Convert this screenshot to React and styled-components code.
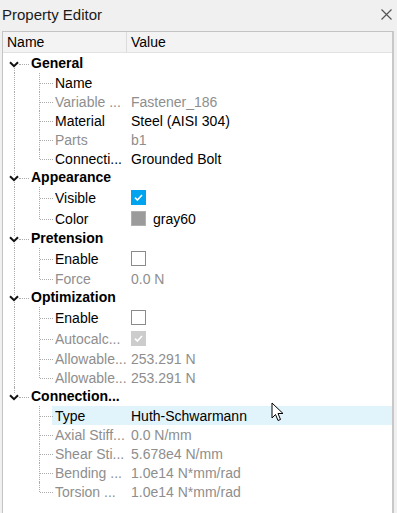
import React from 'react'
import styled, { createGlobalStyle } from 'styled-components'

const GlobalStyle = createGlobalStyle`
  html, body {
    margin: 0;
    padding: 0;
    background: #f0f0f0;
  }
  body {
    font-family: "Liberation Sans", Arial, sans-serif;
    font-size: 14px;
    color: #000;
  }
`

const Window = styled.div`
  position: relative;
  width: 397px;
  height: 513px;
  overflow: hidden;
  display: flex;
  flex-direction: column;
`

const TitleBar = styled.div`
  height: 31px;
  display: flex;
  align-items: center;
  justify-content: space-between;
  padding: 0 4px 0 2px;
  box-sizing: border-box;
`

const Title = styled.span`
  font-size: 15px;
  color: #1a1a1a;
  margin-top: -3px;
`

const CloseBtn = styled.div`
  width: 14px;
  height: 14px;
  display: flex;
  align-items: center;
  justify-content: center;
  margin-top: -2px;
`

const Panel = styled.div`
  flex: 1;
  margin-left: 2px;
  width: 392px;
  box-sizing: border-box;
  background: #fff;
  border: 1px solid #c4c4c4;
  border-right: 2px solid #c8c8c8;
  border-bottom: none;
  display: flex;
  flex-direction: column;
`

const Header = styled.div`
  height: 21px;
  display: flex;
  background: #f3f3f3;
  border-bottom: 1px solid #e2e2e2;
  box-sizing: border-box;
  margin-bottom: 1px;
`

const HeaderCell = styled.div`
  width: ${({ w }) => (w ? `${w}px` : 'auto')};
  flex: ${({ w }) => (w ? 'none' : '1')};
  padding-left: ${({ pad }) => pad}px;
  line-height: 20px;
  border-right: ${({ w }) => (w ? '1px solid #dcdcdc' : 'none')};
  box-sizing: border-box;
`

const Row = styled.div`
  display: flex;
  height: ${({ tall }) => (tall ? 21 : 19)}px;
  align-items: stretch;
`

const Guide = styled.div`
  position: relative;
  width: ${({ w }) => w}px;
  flex: none;

  /* vertical dotted line */
  &::before {
    content: '';
    display: ${({ v }) => (v ? 'block' : 'none')};
    position: absolute;
    left: ${({ vx }) => vx}px;
    top: ${({ v }) => (v === 'bottom' ? '50%' : '0')};
    bottom: ${({ v }) => (v === 'top' ? '50%' : '0')};
    border-left: 1px dotted #ababab;
  }

  /* horizontal dotted line */
  &::after {
    content: '';
    display: ${({ h }) => (h ? 'block' : 'none')};
    position: absolute;
    left: ${({ hx }) => hx}px;
    right: ${({ hr }) => hr || 0}px;
    top: 50%;
    border-top: 1px dotted #ababab;
  }
`

const Chevron = styled.svg`
  position: absolute;
  left: 6px;
  top: 50%;
  margin-top: -3px;
  z-index: 1;
  background: #fff;
`

const Content = styled.div`
  flex: 1;
  display: flex;
  background: ${({ selected }) => (selected ? '#e1f4fc' : 'transparent')};
`

const GroupLabel = styled.div`
  width: 95px;
  font-weight: bold;
  line-height: 19px;
  white-space: nowrap;
  overflow: hidden;
`

const NameCell = styled.div`
  width: 74px;
  flex: none;
  padding-left: 3px;
  box-sizing: border-box;
  display: flex;
  align-items: center;
  white-space: nowrap;
  overflow: hidden;
  color: ${({ disabled }) => (disabled ? '#8e8e8e' : '#000')};
`

const ValueCell = styled.div`
  flex: 1;
  padding-left: 5px;
  display: flex;
  align-items: center;
  gap: 7px;
  white-space: nowrap;
  color: ${({ disabled }) => (disabled ? '#8e8e8e' : '#000')};
`

const Box = styled.div`
  width: 15px;
  height: 15px;
  box-sizing: border-box;
  display: flex;
  align-items: center;
  justify-content: center;
  background: ${({ checked, disabled }) =>
    checked ? (disabled ? '#cccccc' : '#00a3ee') : '#fff'};
  border: 1px solid
    ${({ checked, disabled }) =>
      checked ? (disabled ? '#cccccc' : '#00a3ee') : '#8a8a8a'};
`

const Swatch = styled.div`
  width: 15px;
  height: 15px;
  box-sizing: border-box;
  background: ${({ color }) => color};
  border: 1px solid #b0b0b0;
`

const Cursor = styled.svg`
  position: absolute;
  left: 271px;
  top: 402px;
`

const groups = [
  {
    name: 'General',
    items: [
      { label: 'Name' },
      { label: 'Variable ...', value: 'Fastener_186', disabled: true },
      { label: 'Material', value: 'Steel (AISI 304)' },
      { label: 'Parts', value: 'b1', disabled: true },
      { label: 'Connecti...', value: 'Grounded Bolt' },
    ],
  },
  {
    name: 'Appearance',
    items: [
      { label: 'Visible', check: true },
      { label: 'Color', swatch: '#9b9b9b', value: 'gray60' },
    ],
  },
  {
    name: 'Pretension',
    items: [
      { label: 'Enable', check: false },
      { label: 'Force', value: '0.0 N', disabled: true },
    ],
  },
  {
    name: 'Optimization',
    items: [
      { label: 'Enable', check: false },
      { label: 'Autocalc...', check: true, disabled: true },
      { label: 'Allowable...', value: '253.291 N', disabled: true },
      { label: 'Allowable...', value: '253.291 N', disabled: true },
    ],
  },
  {
    name: 'Connection...',
    items: [
      { label: 'Type', value: 'Huth-Schwarmann', selected: true },
      { label: 'Axial Stiff...', value: '0.0 N/mm', disabled: true },
      { label: 'Shear Sti...', value: '5.678e4 N/mm', disabled: true },
      { label: 'Bending ...', value: '1.0e14 N*mm/rad', disabled: true },
      { label: 'Torsion ...', value: '1.0e14 N*mm/rad', disabled: true },
    ],
  },
]

const Check = ({ color }) => (
  <svg width="9" height="7" viewBox="0 0 9 7">
    <path d="M1 3.6 L3.4 6 L8 1" fill="none" stroke={color} strokeWidth="1.6" />
  </svg>
)

const PropertyRow = ({ item, lastGroup, lastItem }) => {
  const tall = item.check !== undefined || item.swatch
  return (
    <Row tall={tall}>
      <Guide w={25} vx={11} v={lastGroup ? null : 'full'} />
      <Guide w={24} vx={11} v={lastItem ? 'top' : 'full'} h hx={12} hr={-1} />
      <Content selected={item.selected}>
        <NameCell disabled={item.disabled}>{item.label}</NameCell>
        <ValueCell disabled={item.disabled}>
          {item.check !== undefined && (
            <Box checked={item.check} disabled={item.disabled}>
              {item.check && <Check color="#fff" />}
            </Box>
          )}
          {item.swatch && <Swatch color={item.swatch} />}
          {item.value}
        </ValueCell>
      </Content>
    </Row>
  )
}

const GroupRow = ({ name, first, last }) => (
  <Row>
    <Guide
      w={28}
      vx={11}
      v={first ? 'bottom' : last ? 'top' : 'full'}
      h
      hx={16}
      hr={2}
    >
      <Chevron width="10" height="7" viewBox="0 0 10 7">
        <path d="M1 1.2 L5 5.2 L9 1.2" fill="none" stroke="#111" strokeWidth="2" />
      </Chevron>
    </Guide>
    <GroupLabel>{name}</GroupLabel>
  </Row>
)

export default function App() {
  return (
    <>
      <GlobalStyle />
      <Window>
        <TitleBar>
          <Title>Property Editor</Title>
          <CloseBtn>
            <svg width="11" height="11" viewBox="0 0 11 11">
              <path d="M0.5 0.5 L10.5 10.5 M10.5 0.5 L0.5 10.5" stroke="#555" strokeWidth="1.2" />
            </svg>
          </CloseBtn>
        </TitleBar>
        <Panel>
          <Header>
            <HeaderCell w={124} pad={4}>Name</HeaderCell>
            <HeaderCell pad={4}>Value</HeaderCell>
          </Header>
          {groups.map((g, gi) => (
            <React.Fragment key={g.name}>
              <GroupRow name={g.name} first={gi === 0} last={gi === groups.length - 1} />
              {g.items.map((item, ii) => (
                <PropertyRow
                  key={g.name + ii}
                  item={item}
                  lastGroup={gi === groups.length - 1}
                  lastItem={ii === g.items.length - 1}
                />
              ))}
            </React.Fragment>
          ))}
        </Panel>
        <Cursor width="14" height="20" viewBox="0 0 14 20">
          <path
            d="M1 1 L1 16 L4.5 12.5 L7 18.5 L9.5 17.5 L7 11.5 L12 11.5 Z"
            fill="#fff"
            stroke="#000"
            strokeWidth="1"
            strokeLinejoin="miter"
          />
        </Cursor>
      </Window>
    </>
  )
}
